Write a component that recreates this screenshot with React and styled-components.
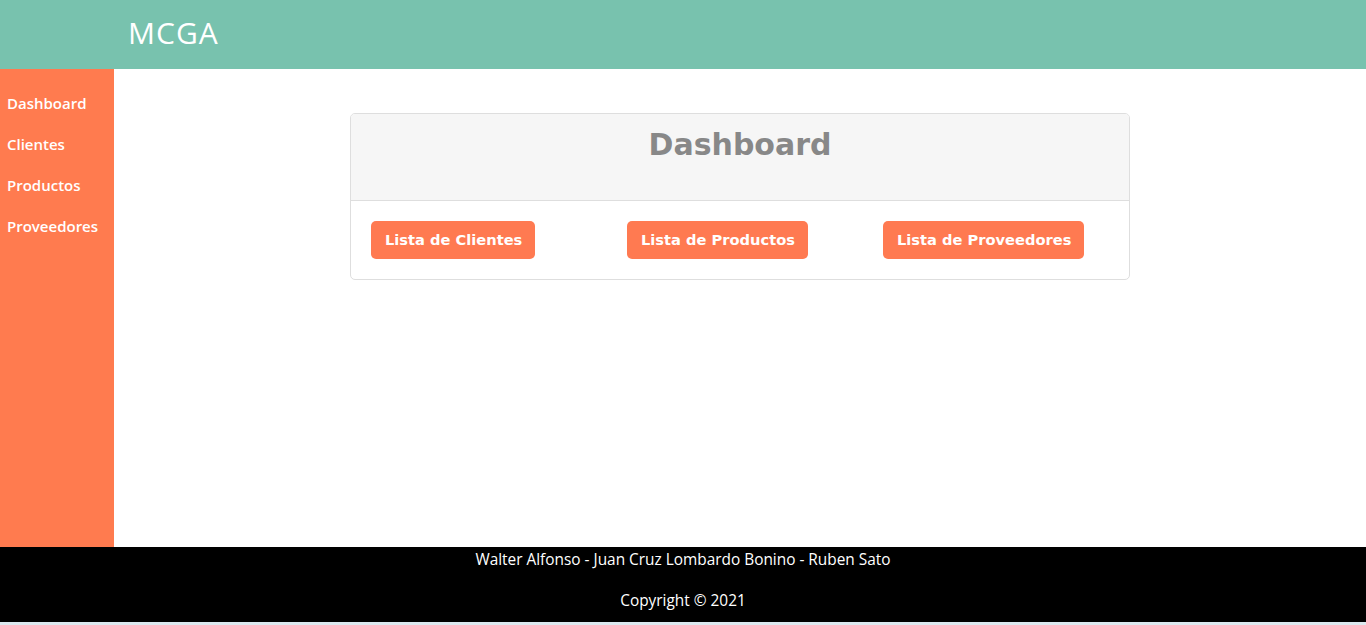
import React from "react";
import styled, { createGlobalStyle } from "styled-components";

const Global = createGlobalStyle`
  html, body { margin: 0; padding: 0; background: #dce9ef; }
  body { font-family: "Open Sans", "Liberation Sans", sans-serif; }
  * { box-sizing: border-box; }
`;

const Page = styled.div`
  display: flex;
  flex-direction: column;
  height: 622px;
  background: #fff;
`;

const Header = styled.header`
  height: 69px;
  flex: none;
  background: #78c2ae;
  display: flex;
  align-items: center;
  padding: 0 0 5px 128px;
`;

const Brand = styled.h1`
  margin: 0;
  color: #fff;
  font-family: "Open Sans", sans-serif;
  font-weight: 400;
  font-size: 30px;
  letter-spacing: 1px;
`;

const Body = styled.div`
  flex: 1;
  display: flex;
  min-height: 0;
`;

const Sidebar = styled.nav`
  width: 114px;
  flex: none;
  background: #ff7b4f;
  display: flex;
  flex-direction: column;
  gap: 20px;
  padding: 24px 0 0 7px;
`;

const NavLink = styled.a`
  color: #fff;
  font-family: "Open Sans", sans-serif;
  font-weight: 600;
  font-size: 15px;
  line-height: 21px;
  text-decoration: none;
`;

const Main = styled.main`
  flex: 1;
  display: flex;
  justify-content: center;
  align-items: flex-start;
  padding-top: 44px;
`;

const Card = styled.section`
  width: 780px;
  border: 1px solid #dedede;
  border-radius: 5px;
  overflow: hidden;
  background: #fff;
`;

const CardHeader = styled.div`
  height: 87px;
  background: #f6f6f6;
  border-bottom: 1px solid #dedede;
  display: flex;
  justify-content: center;
  padding-top: 11px;
`;

const Title = styled.h2`
  margin: 0;
  color: #888888;
  font-family: "DejaVu Sans", sans-serif;
  font-weight: 700;
  font-size: 30px;
  line-height: 40px;
`;

const CardBody = styled.div`
  display: grid;
  grid-template-columns: repeat(3, 256px);
  padding: 20px;
`;

const Button = styled.a`
  justify-self: start;
  display: inline-flex;
  align-items: center;
  height: 38px;
  padding: 0 13px 2px 14px;
  background: #ff7a51;
  color: #fff;
  border-radius: 5px;
  font-family: "DejaVu Sans", sans-serif;
  font-weight: 700;
  font-size: 14.65px;
  text-decoration: none;
`;

const Footer = styled.footer`
  height: 75px;
  flex: none;
  background: #000;
  color: #fff;
  text-align: center;
  font-family: "Open Sans", sans-serif;
  font-size: 15.4px;
  line-height: 21px;
  padding-top: 2px;
`;

const FooterLine = styled.p`
  margin: 0 0 20px;
`;

export default function App() {
  return (
    <>
      <Global />
      <Page>
        <Header>
          <Brand>MCGA</Brand>
        </Header>
        <Body>
          <Sidebar>
            <NavLink href="#">Dashboard</NavLink>
            <NavLink href="#">Clientes</NavLink>
            <NavLink href="#">Productos</NavLink>
            <NavLink href="#">Proveedores</NavLink>
          </Sidebar>
          <Main>
            <Card>
              <CardHeader>
                <Title>Dashboard</Title>
              </CardHeader>
              <CardBody>
                <Button href="#">Lista de Clientes</Button>
                <Button href="#">Lista de Productos</Button>
                <Button href="#">Lista de Proveedores</Button>
              </CardBody>
            </Card>
          </Main>
        </Body>
        <Footer>
          <FooterLine>Walter Alfonso - Juan Cruz Lombardo Bonino - Ruben Sato</FooterLine>
          <FooterLine>Copyright © 2021</FooterLine>
        </Footer>
      </Page>
    </>
  );
}
